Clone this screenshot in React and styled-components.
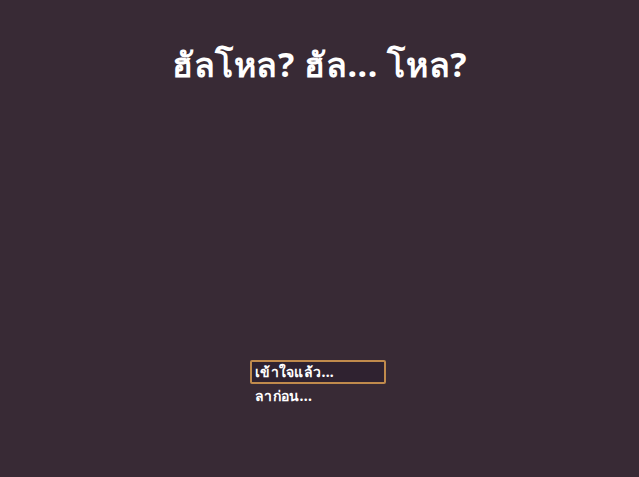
import React from "react";
import styled, { createGlobalStyle } from "styled-components";

const Global = createGlobalStyle`
  html, body {
    margin: 0;
    padding: 0;
    background: #382a35;
  }
  body {
    font-family: "Noto Sans", "DejaVu Sans", sans-serif;
  }
`;

const Screen = styled.div`
  width: 639px;
  height: 477px;
  background: #382a35;
  display: flex;
  flex-direction: column;
  align-items: center;
  box-sizing: border-box;
  padding-top: 36px;
`;

const Title = styled.h1`
  margin: 0;
  color: #ffffff;
  font-family: "Noto Sans", "DejaVu Sans", sans-serif;
  font-weight: 700;
  font-size: 34px;
  line-height: 56px;
  letter-spacing: 0.6px;
`;

const Menu = styled.div`
  margin-top: 268px;
  display: flex;
  flex-direction: column;
  gap: 0;
  width: 136px;
  margin-left: -3px;
`;

const Option = styled.div`
  height: 24px;
  box-sizing: border-box;
  display: flex;
  align-items: center;
  padding-left: 3px;
  color: #ffffff;
  font-family: "Noto Sans", "DejaVu Sans", sans-serif;
  font-weight: 700;
  font-size: 14px;
  letter-spacing: 0.3px;
  border: 2px solid ${(p) => (p.$active ? "#c08a4c" : "transparent")};
  border-radius: 2px;
  background: ${(p) => (p.$active ? "#2f2230" : "transparent")};
`;

export default function App() {
  return (
    <>
      <Global />
      <Screen>
        <Title>ฮัลโหล? ฮัล... โหล?</Title>
        <Menu>
          <Option $active>เข้าใจแล้ว...</Option>
          <Option>ลาก่อน...</Option>
        </Menu>
      </Screen>
    </>
  );
}
